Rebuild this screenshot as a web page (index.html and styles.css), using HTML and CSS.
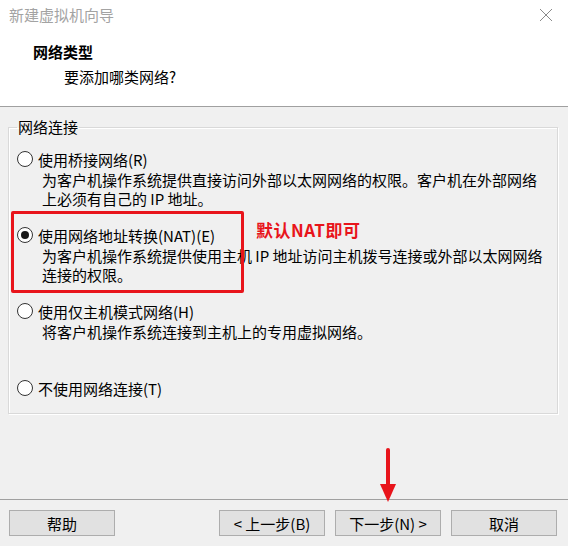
FILE: index.html
```html
<!DOCTYPE html>
<html lang="zh-CN">
<head>
  <meta charset="UTF-8">
  <title>新建虚拟机向导</title>
  <link rel="stylesheet" href="styles.css">
</head>
<body>
  <header class="wizard-header">
    <div class="title-bar">
      <span class="title">新建虚拟机向导</span>
      <svg class="close" width="14" height="14" viewBox="0 0 14 14">
        <path d="M1 1 L13 13 M13 1 L1 13" stroke="#8a8a8a" stroke-width="1" fill="none"/>
      </svg>
    </div>
    <h1 class="step-title">网络类型</h1>
    <div class="step-subtitle">要添加哪类网络?</div>
  </header>

  <main class="wizard-body">
    <fieldset class="group">
      <legend>网络连接</legend>

      <label class="option">
        <span class="option-row"><span class="radio"></span>使用桥接网络(R)</span>
        <span class="desc">为客户机操作系统提供直接访问外部以太网网络的权限。客户机在外部网络</span>
        <span class="desc">上必须有自己的 IP 地址。</span>
      </label>

      <label class="option">
        <span class="option-row"><span class="radio checked"></span>使用网络地址转换(NAT)(E)</span>
        <span class="desc">为客户机操作系统提供使用主机 IP 地址访问主机拨号连接或外部以太网网络</span>
        <span class="desc">连接的权限。</span>
      </label>

      <label class="option">
        <span class="option-row"><span class="radio"></span>使用仅主机模式网络(H)</span>
        <span class="desc">将客户机操作系统连接到主机上的专用虚拟网络。</span>
      </label>

      <label class="option last">
        <span class="option-row"><span class="radio"></span>不使用网络连接(T)</span>
      </label>
    </fieldset>
  </main>

  <footer class="wizard-footer">
    <button class="btn">帮助</button>
    <div class="spacer"></div>
    <button class="btn">&lt; 上一步(B)</button>
    <button class="btn">下一步(N) &gt;</button>
    <button class="btn">取消</button>
  </footer>

  <!-- annotations -->
  <div class="mark-box"></div>
  <div class="mark-text">默认NAT即可</div>
  <svg class="mark-arrow" width="24" height="56" viewBox="0 0 24 56">
    <path d="M12 2 L12 40" stroke="#e8141b" stroke-width="4" stroke-linecap="round"/>
    <path d="M4 36 L20 36 L12 54 Z" fill="#e8141b"/>
  </svg>
</body>
</html>
```

FILE: styles.css
```css
* {
  box-sizing: border-box;
}

body {
  margin: 0;
  width: 568px;
  height: 546px;
  display: flex;
  flex-direction: column;
  background-color: #f0f0f0;
  color: #000;
  font-family: "Noto Sans CJK SC", "Noto Sans", sans-serif;
  font-size: 15px;
  position: relative;
  overflow: hidden;
}

.wizard-header {
  height: 107px;
  background-color: #fff;
  border-bottom: 1px solid #a0a0a0;
  padding: 5px 0 0 9px;
}

.title-bar {
  display: flex;
  justify-content: space-between;
  align-items: center;
  height: 20px;
  padding-right: 15px;
}

.title {
  color: #a3a3a3;
  font-size: 15px;
  line-height: 20px;
}

.step-title {
  margin: 17px 0 0 24px;
  font-size: 15px;
  font-weight: bold;
  line-height: 20px;
}

.step-subtitle {
  margin: 5px 0 0 55px;
  line-height: 20px;
}

.wizard-body {
  flex: 1;
  padding: 10px 10px 0 8px;
}

.group {
  margin: 0;
  padding: 11px 0 0 8px;
  border: 1px solid #d9d9d9;
  box-shadow: 1px 1px 0 #fff, inset 1px 1px 0 #fff;
}

.group legend {
  margin-left: 0;
  padding: 0 1px;
  line-height: 20px;
  color: #000;
}

.option {
  display: block;
  height: 76px;
}

.option.last {
  height: 37px;
  padding-top: 1px;
}

.option-row {
  display: flex;
  align-items: center;
  height: 22px;
}

.radio {
  width: 16px;
  height: 16px;
  border: 1px solid #333;
  border-radius: 50%;
  background-color: #fff;
  margin-right: 5px;
  position: relative;
  flex-shrink: 0;
}

.radio.checked::after {
  content: "";
  position: absolute;
  left: 3px;
  top: 3px;
  width: 8px;
  height: 8px;
  border-radius: 50%;
  background-color: #1a1a1a;
}

.desc {
  display: block;
  margin: 0 0 0 25px;
  height: 19px;
  line-height: 19px;
}

.wizard-footer {
  height: 47px;
  border-top: 1px solid #a0a0a0;
  display: flex;
  align-items: flex-start;
  gap: 10px;
  padding: 10px 11px 0 9px;
}

.spacer {
  flex: 1;
}

.btn {
  width: 106px;
  height: 26px;
  background-color: #e1e1e1;
  border: 1px solid #adadad;
  font-family: "Noto Sans CJK SC", "Noto Sans", sans-serif;
  font-size: 15px;
  color: #000;
  padding: 0;
}

.mark-box {
  position: absolute;
  left: 11px;
  top: 211px;
  width: 233px;
  height: 82px;
  border: 3px solid #e8141b;
  border-radius: 2px;
}

.mark-text {
  position: absolute;
  left: 256px;
  top: 219px;
  color: #e8141b;
  font-weight: bold;
  font-size: 17px;
  line-height: 22px;
  letter-spacing: 0.5px;
}

.mark-arrow {
  position: absolute;
  left: 376px;
  top: 448px;
}
```
